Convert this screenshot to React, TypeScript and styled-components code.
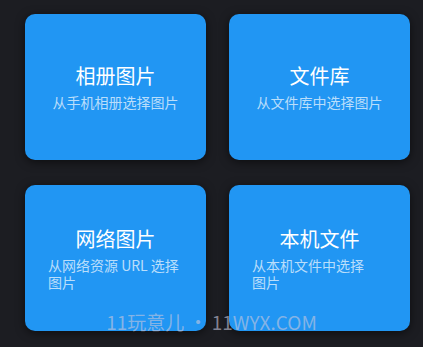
import styled, { createGlobalStyle } from "styled-components";

const GlobalStyle = createGlobalStyle`
  html, body {
    margin: 0;
    padding: 0;
    background: #1c1d22;
  }
  body {
    font-family: "Noto Sans CJK SC", "Noto Sans", sans-serif;
  }
`;

const Page = styled.div`
  position: relative;
  width: 423px;
  height: 347px;
  box-sizing: border-box;
  padding: 14px 13px 0 25px;
  background: #1c1d22;
  overflow: hidden;
`;

const Grid = styled.div`
  display: grid;
  grid-template-columns: 181px 181px;
  grid-template-rows: 146px 146px;
  column-gap: 23px;
  row-gap: 25px;
`;

const Card = styled.button`
  display: flex;
  flex-direction: column;
  align-items: center;
  justify-content: center;
  box-sizing: border-box;
  padding: 0 23px;
  border: none;
  border-radius: 10px;
  background: #2196f3;
  box-shadow: 0 2px 10px rgba(0, 0, 0, 0.55);
  font-family: inherit;
  cursor: pointer;
`;

const Title = styled.div`
  color: #ffffff;
  font-size: 20px;
  line-height: 26px;
`;

const Subtitle = styled.div`
  margin-top: 5px;
  color: rgba(255, 255, 255, 0.7);
  font-size: 14px;
  line-height: 17px;
  text-align: left;
`;

// keeps the trailing word together when the line wraps
const Word = styled.span`
  white-space: nowrap;
`;

const Watermark = styled.div`
  position: absolute;
  left: 0;
  right: 0;
  top: 310px;
  text-align: center;
  color: rgba(200, 200, 220, 0.6);
  font-size: 19px;
  line-height: 24px;
  pointer-events: none;
`;

const sources = [
  { title: "相册图片", desc: "从手机相册选择", tail: "图片" },
  { title: "文件库", desc: "从文件库中选择", tail: "图片" },
  { title: "网络图片", desc: "从网络资源 URL 选择", tail: "图片" },
  { title: "本机文件", desc: "从本机文件中选择", tail: "图片" },
];

export default function App() {
  return (
    <>
      <GlobalStyle />
      <Page>
        <Grid>
          {sources.map((s) => (
            <Card key={s.title}>
              <Title>{s.title}</Title>
              <Subtitle>
                {s.desc}
                <Word>{s.tail}</Word>
              </Subtitle>
            </Card>
          ))}
        </Grid>
        <Watermark>11玩意儿 • 11WYX.COM</Watermark>
      </Page>
    </>
  );
}
